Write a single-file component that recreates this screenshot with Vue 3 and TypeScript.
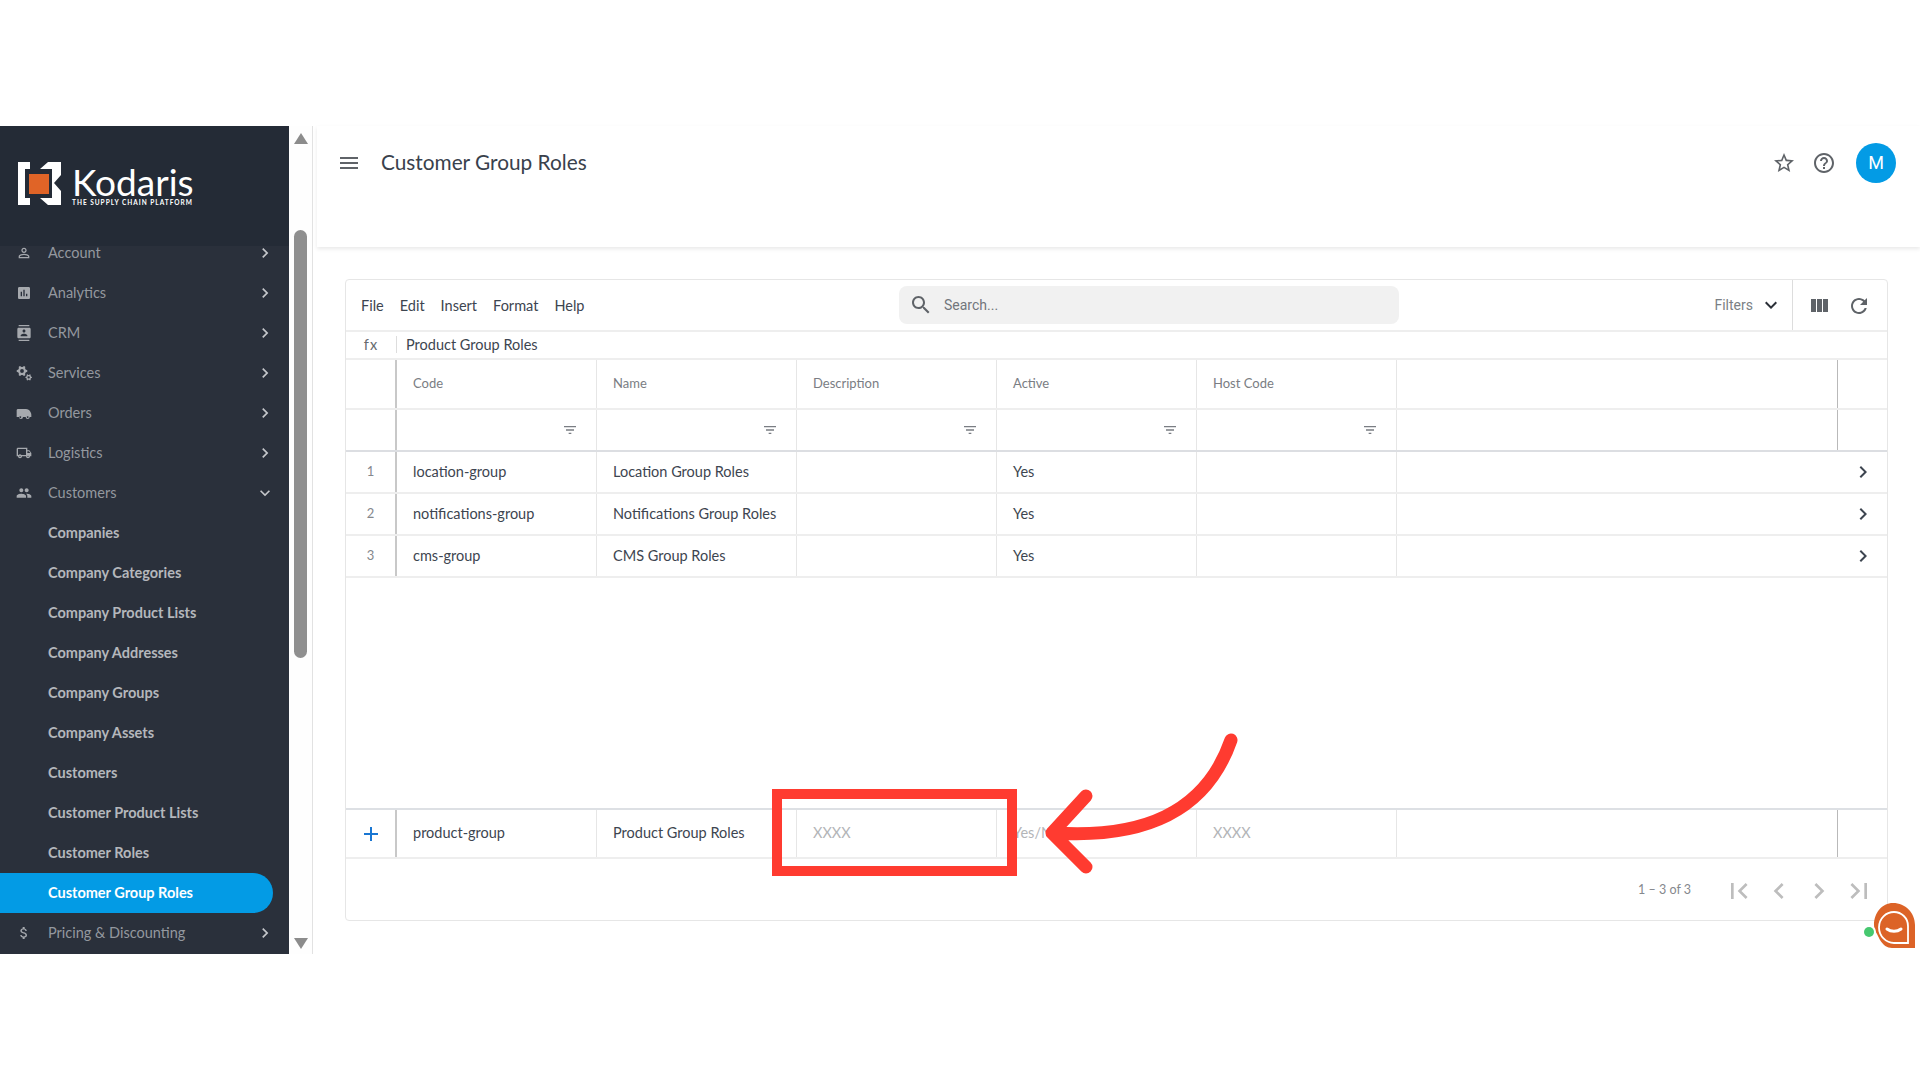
<script setup lang="ts">
// builds a cog with a round hole, the Services icon uses two of them
const gear = (cx: number, cy: number, r: number, teeth: number) => {
  const pts: string[] = []
  const step = (Math.PI * 2) / (teeth * 4)
  for (let i = 0; i < teeth * 4; i++) {
    const rad = i % 4 < 2 ? r : r * 0.74
    const a = step * (i - 0.5)
    pts.push(`${(cx + rad * Math.cos(a)).toFixed(2)} ${(cy + rad * Math.sin(a)).toFixed(2)}`)
  }
  const h = r * 0.36
  return `M${pts.join('L')}ZM${cx - h} ${cy}a${h} ${h} 0 1 0 ${h * 2} 0a${h} ${h} 0 1 0 ${-h * 2} 0Z`
}

const icons: Record<string, string> = {
  person: 'M12 5.9c1.16 0 2.1.94 2.1 2.1s-.94 2.1-2.1 2.1S9.9 9.16 9.9 8s.94-2.1 2.1-2.1m0 9c2.97 0 6.1 1.46 6.1 2.1v1.1H5.9V17c0-.64 3.13-2.1 6.1-2.1M12 4C9.79 4 8 5.79 8 8s1.79 4 4 4 4-1.79 4-4-1.79-4-4-4zm0 9c-2.67 0-8 1.34-8 4v3h16v-3c0-2.66-5.33-4-8-4z',
  chart: 'M19 3H5c-1.1 0-2 .9-2 2v14c0 1.1.9 2 2 2h14c1.1 0 2-.9 2-2V5c0-1.1-.9-2-2-2zM9 17H7v-7h2v7zm4 0h-2V7h2v10zm4 0h-2v-4h2v4z',
  contacts: 'M20 0H4v2h16V0zM4 24h16v-2H4v2zM20 4H4c-1.1 0-2 .9-2 2v12c0 1.1.9 2 2 2h16c1.1 0 2-.9 2-2V6c0-1.1-.9-2-2-2zm-8 2.75c1.24 0 2.25 1.01 2.25 2.25s-1.01 2.25-2.25 2.25S9.75 10.24 9.75 9 10.76 6.75 12 6.75zM17 17H7v-1.5c0-1.67 3.33-2.5 5-2.5s5 .83 5 2.5V17z',
  gears: gear(9, 9, 8, 6) + gear(19, 18.5, 5, 6),
  van: 'M1 8c0-1.1.9-2 2-2h12c2.800 0 5.200 1.500 6.500 4 1 1.500 1.500 3 1.500 4.500V18h-2.500a3 3 0 0 1-6 0h-4a3 3 0 0 1-6 0H1zM6.500 16.700a1.300 1.300 0 1 0 .01 0zM17.500 16.700a1.300 1.300 0 1 0 .01 0z',
  truck: 'M20 8h-3V4H3c-1.100 0-2 .9-2 2v11h2c0 1.660 1.340 3 3 3s3-1.340 3-3h6c0 1.660 1.340 3 3 3s3-1.340 3-3h2v-5l-3-4zm-.5 1.500l1.960 2.500H17V9.500h2.500zM6 18c-.55 0-1-.45-1-1s.45-1 1-1 1 .45 1 1-.45 1-1 1zm2.220-3c-.55-.61-1.330-1-2.220-1s-1.670.39-2.220 1H3V6h12v9H8.220zM18 18c-.55 0-1-.45-1-1s.45-1 1-1 1 .45 1 1-.45 1-1 1z',
  people: 'M16 11c1.660 0 2.990-1.340 2.990-3S17.660 5 16 5c-1.660 0-3 1.340-3 3s1.340 3 3 3zm-8 0c1.660 0 2.990-1.340 2.990-3S9.660 5 8 5C6.340 5 5 6.340 5 8s1.340 3 3 3zm0 2c-2.330 0-7 1.170-7 3.500V19h14v-2.500c0-2.330-4.670-3.500-7-3.500zm8 0c-.29 0-.62.02-.97.05 1.160.84 1.970 1.970 1.970 3.450V19h6v-2.500c0-2.330-4.670-3.500-7-3.500z',
  money: 'M11.800 10.900c-2.270-.59-3-1.200-3-2.150 0-1.090 1.010-1.850 2.700-1.850 1.780 0 2.440.85 2.500 2.100h2.210c-.07-1.720-1.120-3.300-3.210-3.810V3h-3v2.160c-1.940.42-3.500 1.680-3.500 3.610 0 2.310 1.910 3.460 4.700 4.130 2.500.6 3 1.480 3 2.410 0 .69-.49 1.790-2.700 1.790-2.060 0-2.870-.92-2.980-2.100h-2.200c.12 2.190 1.760 3.420 3.680 3.830V21h3v-2.150c1.950-.37 3.500-1.500 3.500-3.550 0-2.840-2.430-3.810-4.700-4.400z',
  right: 'M10 6L8.590 7.410 13.170 12l-4.580 4.590L10 18l6-6z',
  left: 'M15.410 7.410L14 6l-6 6 6 6 1.410-1.410L10.830 12z',
  down: 'M16.590 8.590L12 13.170 7.410 8.590 6 10l6 6 6-6z',
  first: 'M18.410 16.590L13.820 12l4.590-4.590L17 6l-6 6 6 6zM6 6h2v12H6z',
  last: 'M5.590 7.410L10.180 12l-4.590 4.590L7 18l6-6-6-6zM16 6h2v12h-2z',
  filter: 'M10 18h4v-2h-4v2zM3 6v2h18V6H3zm3 7h12v-2H6v2z',
  menu: 'M3 18h18v-2H3v2zm0-5h18v-2H3v2zm0-7v2h18V6H3z',
  star: 'M22 9.240l-7.190-.62L12 2 9.190 8.630 2 9.240l5.460 4.730L5.820 21 12 17.270 18.180 21l-1.630-7.030L22 9.240zM12 15.400l-3.760 2.270 1-4.280-3.320-2.880 4.380-.38L12 6.100l1.710 4.040 4.380.38-3.320 2.880 1 4.280L12 15.400z',
  help: 'M11 18h2v-2h-2v2zm1-16C6.480 2 2 6.480 2 12s4.480 10 10 10 10-4.480 10-10S17.520 2 12 2zm0 18c-4.410 0-8-3.590-8-8s3.590-8 8-8 8 3.590 8 8-3.590 8-8 8zm0-14c-2.210 0-4 1.790-4 4h2c0-1.100.9-2 2-2s2 .9 2 2c0 2-3 1.750-3 5h2c0-2.250 3-2.500 3-5 0-2.210-1.790-4-4-4z',
  search: 'M15.500 14h-.79l-.28-.27C15.410 12.590 16 11.110 16 9.500 16 5.910 13.090 3 9.500 3S3 5.910 3 9.500 5.910 16 9.500 16c1.610 0 3.090-.59 4.230-1.570l.27.28v.79l5 4.990L20.490 19l-4.990-5zm-6 0C7.010 14 5 11.990 5 9.500S7.010 5 9.500 5 14 7.010 14 9.500 11.990 14 9.500 14z',
  columns: 'M10 18h5V5h-5v13zm-6 0h5V5H4v13zM16 5v13h5V5h-5z',
  refresh: 'M17.650 6.350C16.200 4.900 14.210 4 12 4c-4.420 0-7.990 3.580-7.990 8s3.570 8 7.990 8c3.730 0 6.840-2.550 7.730-6h-2.080c-.82 2.330-3.040 4-5.650 4-3.310 0-6-2.690-6-6s2.690-6 6-6c1.660 0 3.140.69 4.220 1.780L13 11h7V4l-2.350 2.350z',
  add: 'M19 13h-6v6h-2v-6H5v-2h6V5h2v6h6v2z',
}

interface NavItem {
  label: string
  icon?: string
  open?: boolean
  closed?: boolean
  active?: boolean
}

const nav: NavItem[] = [
  { label: 'Account', icon: 'person', closed: true },
  { label: 'Analytics', icon: 'chart', closed: true },
  { label: 'CRM', icon: 'contacts', closed: true },
  { label: 'Services', icon: 'gears', closed: true },
  { label: 'Orders', icon: 'van', closed: true },
  { label: 'Logistics', icon: 'truck', closed: true },
  { label: 'Customers', icon: 'people', open: true },
  { label: 'Companies' },
  { label: 'Company Categories' },
  { label: 'Company Product Lists' },
  { label: 'Company Addresses' },
  { label: 'Company Groups' },
  { label: 'Company Assets' },
  { label: 'Customers' },
  { label: 'Customer Product Lists' },
  { label: 'Customer Roles' },
  { label: 'Customer Group Roles', active: true },
  { label: 'Pricing & Discounting', icon: 'money', closed: true },
]

const menus = ['File', 'Edit', 'Insert', 'Format', 'Help']
const columns = ['Code', 'Name', 'Description', 'Active', 'Host Code']

const rows = [
  { n: 1, code: 'location-group', name: 'Location Group Roles' },
  { n: 2, code: 'notifications-group', name: 'Notifications Group Roles' },
  { n: 3, code: 'cms-group', name: 'CMS Group Roles' },
]

const pager = ['first', 'left', 'right', 'last']
</script>

<template>
  <div class="page">
    <aside class="sidebar">
      <div class="side-panel">
        <div class="brand">
          <svg class="mark" viewBox="0 0 43 43" width="43" height="43">
            <path fill="#fff" d="M0 0H12V7H7V36H12V43H0z" />
            <path fill="#fff" d="M22 7L30 0H43V13L36 21L43 29V43H30L22 36H34V7z" />
            <rect x="11" y="12" width="20" height="20" fill="#e06427" />
          </svg>
          <div class="wordmark">
            <div class="word">Kodaris</div>
            <div class="tag">THE SUPPLY CHAIN PLATFORM</div>
          </div>
        </div>
        <nav class="nav">
          <div
            v-for="item in nav"
            :key="item.label + (item.icon || '')"
            class="nav-item"
            :class="{ top: item.icon, active: item.active }"
          >
            <svg v-if="item.icon" class="nav-icon" viewBox="0 0 24 24"><path fill-rule="evenodd" :d="icons[item.icon]" /></svg>
            <span class="nav-label">{{ item.label }}</span>
            <svg v-if="item.closed" class="nav-chev" viewBox="0 0 24 24"><path :d="icons.right" /></svg>
            <svg v-if="item.open" class="nav-chev" viewBox="0 0 24 24"><path :d="icons.down" /></svg>
          </div>
        </nav>
      </div>
      <div class="scrollbar">
        <span class="arrow up"></span>
        <span class="thumb"></span>
        <span class="arrow dn"></span>
      </div>
    </aside>

    <main class="main">
      <header class="topbar">
        <svg class="ico menu-ico" viewBox="0 0 24 24"><path :d="icons.menu" /></svg>
        <h1 class="title">Customer Group Roles</h1>
        <svg class="ico star" viewBox="0 0 24 24"><path :d="icons.star" /></svg>
        <svg class="ico help" viewBox="0 0 24 24"><path :d="icons.help" /></svg>
        <div class="avatar">M</div>
      </header>

      <section class="card">
        <div class="toolbar">
          <div class="menus">
            <span v-for="m in menus" :key="m">{{ m }}</span>
          </div>
          <div class="search">
            <svg class="ico" viewBox="0 0 24 24"><path :d="icons.search" /></svg>
            <span>Search...</span>
          </div>
          <div class="filters">
            <span>Filters</span>
            <svg class="ico" viewBox="0 0 24 24"><path :d="icons.down" /></svg>
          </div>
          <div class="tools">
            <svg class="ico" viewBox="0 0 24 24"><path :d="icons.columns" /></svg>
            <svg class="ico" viewBox="0 0 24 24"><path :d="icons.refresh" /></svg>
          </div>
        </div>

        <div class="fx-row">
          <span class="fx">fx</span>
          <span class="fx-value">Product Group Roles</span>
        </div>

        <div class="row head">
          <div class="cell gutter"></div>
          <div v-for="c in columns" :key="c" class="cell">{{ c }}</div>
          <div class="cell"></div>
          <div class="cell end"></div>
        </div>

        <div class="row filter-row">
          <div class="cell gutter"></div>
          <div v-for="c in columns" :key="c" class="cell">
            <svg class="filter-ico" viewBox="0 0 24 24"><path :d="icons.filter" /></svg>
          </div>
          <div class="cell"></div>
          <div class="cell end"></div>
        </div>

        <div v-for="r in rows" :key="r.n" class="row data">
          <div class="cell gutter num">{{ r.n }}</div>
          <div class="cell">{{ r.code }}</div>
          <div class="cell">{{ r.name }}</div>
          <div class="cell"></div>
          <div class="cell">Yes</div>
          <div class="cell"></div>
          <div class="cell plain"></div>
          <div class="cell end">
            <svg class="ico row-chev" viewBox="0 0 24 24"><path :d="icons.right" /></svg>
          </div>
        </div>

        <div class="spacer"></div>

        <div class="row add-row">
          <div class="cell gutter">
            <svg class="plus" viewBox="0 0 24 24"><path :d="icons.add" /></svg>
          </div>
          <div class="cell">product-group</div>
          <div class="cell">Product Group Roles</div>
          <div class="cell hint">XXXX</div>
          <div class="cell hint">Yes/No</div>
          <div class="cell hint">XXXX</div>
          <div class="cell"></div>
          <div class="cell end"></div>
        </div>

        <div class="pager">
          <span class="count">1 – 3 of 3</span>
          <svg v-for="p in pager" :key="p" class="pager-ico" viewBox="0 0 24 24"><path :d="icons[p]" /></svg>
        </div>
      </section>
    </main>

    <!-- annotation drawn over the screenshot -->
    <svg class="callout" viewBox="0 0 1920 1080" width="1920" height="1080">
      <rect x="777" y="794" width="235" height="77" fill="none" stroke="#ff3b30" stroke-width="10" />
      <path
        d="M1231 740C1205 815 1140 838 1056 833M1086 796L1052 833L1086 867"
        fill="none"
        stroke="#ff3b30"
        stroke-width="13"
        stroke-linecap="round"
        stroke-linejoin="round"
      />
    </svg>

    <svg class="chat" viewBox="0 0 56 56" width="56" height="56">
      <path fill="#dc6327" d="M30 3c12.500 0 22 10 22 22v23H29c-5 0-9-3-12-8l-3-6c-2-3-3-6-3-9C11 13 19 3 30 3z" />
      <path fill="none" stroke="#fff" stroke-width="1.800" d="M31 12c7.500 0 14 6 14 14v17H31c-8 0-15-7-15-15.500C16 18.500 23 12 31 12z" />
      <path fill="none" stroke="#fff" stroke-width="3" stroke-linecap="round" d="M24 29c4 3 10 3 14 0" />
      <circle cx="6" cy="32" r="7" fill="#fff" />
      <circle cx="6" cy="32" r="5" fill="#46c86f" />
    </svg>
  </div>
</template>

<style scoped>
.page {
  position: relative;
  width: 1920px;
  height: 1080px;
  padding: 126px 0;
  box-sizing: border-box;
  display: flex;
  background: #fff;
  overflow: hidden;
  font-family: "Lato", sans-serif;
  color: #3d4550;
}

.sidebar {
  display: flex;
  flex: none;
  width: 313px;
  height: 828px;
  border-right: 1px solid #e2e2e2;
  box-sizing: border-box;
}

.side-panel {
  width: 289px;
  background: #2a303b;
  overflow: hidden;
}

.brand {
  position: relative;
  z-index: 1;
  height: 120px;
  background: #242b36;
  display: flex;
  align-items: flex-start;
  padding: 36px 0 0 18px;
  box-sizing: border-box;
}

.mark {
  flex: none;
}

.wordmark {
  margin-left: 11px;
  color: #fff;
}

.word {
  font-size: 37px;
  line-height: 37px;
  margin-top: 1px;
}

.tag {
  font-size: 6.500px;
  line-height: 6px;
  font-weight: 700;
  letter-spacing: 1px;
  white-space: nowrap;
}

.nav {
  margin-top: -13px;
}

.nav-item {
  position: relative;
  height: 40px;
  display: flex;
  align-items: center;
  padding-left: 48px;
  margin-right: 16px;
  font-size: 14.500px;
  font-weight: 700;
  color: #b4b7bc;
}

.nav-label {
  margin-top: -2px;
}

.nav-item.top {
  font-weight: 400;
  color: #94989f;
}

.nav-item.active {
  background: #039be5;
  color: #fff;
  border-radius: 0 20px 20px 0;
}

.nav-icon {
  position: absolute;
  left: 16px;
  width: 16px;
  height: 16px;
  fill: #a6a9ae;
}

.nav-chev {
  position: absolute;
  right: -2px;
  width: 20px;
  height: 20px;
  fill: #c4c6ca;
}

.scrollbar {
  position: relative;
  flex: 1;
  display: flex;
  flex-direction: column;
  align-items: center;
  background: #fefefe;
}

.arrow {
  position: absolute;
  width: 0;
  height: 0;
  border-left: 7px solid transparent;
  border-right: 7px solid transparent;
}

.arrow.up {
  top: 7px;
  border-bottom: 11px solid #8c8c8c;
}

.arrow.dn {
  bottom: 5px;
  border-top: 11px solid #8c8c8c;
}

.thumb {
  width: 13px;
  height: 428px;
  margin-top: 104px;
  border-radius: 7px;
  background: #8f8f8f;
}

.main {
  flex: 1;
  min-width: 0;
  display: flex;
  flex-direction: column;
}

.ico {
  width: 24px;
  height: 24px;
  fill: #5f6368;
  flex: none;
}

.topbar {
  height: 121px;
  flex: none;
  display: flex;
  align-items: flex-start;
  margin-left: 4px;
  padding: 17px 24px 0 20px;
  box-sizing: border-box;
  box-shadow: 0 2px 4px rgba(0, 0, 0, 0.09);
}

.menu-ico {
  margin-top: 8px;
}

.title {
  margin: -1px 0 0 20px;
  flex: 1;
  font-size: 20.800px;
  line-height: 40px;
  font-weight: 400;
  color: #39414c;
}

.star {
  margin: 8px 0 0;
}

.help {
  margin: 8px 0 0 16px;
}

.avatar {
  margin-left: 20px;
  width: 40px;
  height: 40px;
  border-radius: 50%;
  background: #039be5;
  color: #fff;
  font-family: "Roboto", sans-serif;
  font-size: 18px;
  line-height: 40px;
  text-align: center;
}

.card {
  margin: 32px 32px 33px;
  flex: 1;
  display: flex;
  flex-direction: column;
  border: 1px solid #e6e6e6;
  border-radius: 4px;
  font-size: 14.500px;
}

.toolbar {
  flex: none;
  height: 52px;
  display: grid;
  grid-template-columns: 553px 500px 1fr 95px;
  align-items: center;
  border-bottom: 2px solid #eee;
  box-sizing: border-box;
}

.menus {
  display: flex;
  gap: 16px;
  padding-left: 15px;
  color: #3d4550;
}

.search {
  height: 38px;
  display: flex;
  align-items: center;
  gap: 11px;
  padding-left: 10px;
  background: #f1f1f1;
  border-radius: 8px;
  color: #72767c;
  font-family: "Roboto", sans-serif;
  font-size: 14px;
}

.filters {
  display: flex;
  justify-content: flex-end;
  align-items: center;
  gap: 6px;
  padding-right: 9px;
  color: #7b7f85;
  font-family: "Roboto", sans-serif;
  font-size: 14px;
}

.filters .ico {
  fill: #2b3038;
}

.tools {
  height: 50px;
  display: flex;
  align-items: center;
  gap: 16px;
  padding: 2px 0 0 14px;
  border-left: 1px solid #ddd;
  box-sizing: border-box;
}

.fx-row {
  flex: none;
  height: 28px;
  display: flex;
  align-items: center;
  padding-bottom: 2px;
  border-bottom: 2px solid #eee;
  box-sizing: border-box;
}

.fx {
  width: 50px;
  text-align: center;
  letter-spacing: 1px;
  color: #66696e;
  border-right: 1px solid #ddd;
}

.fx-value {
  padding-left: 9px;
}

.row {
  flex: none;
  display: grid;
  grid-template-columns: 51px 200px 200px 200px 200px 200px 1fr 49px;
  box-sizing: border-box;
  border-bottom: 2px solid #eee;
}

.cell {
  display: flex;
  align-items: center;
  padding: 0 0 2px 16px;
  border-right: 1px solid #e6e6e6;
  min-width: 0;
  white-space: nowrap;
}

.cell.gutter {
  padding: 0 0 2px;
  justify-content: center;
  border-right: 2px solid #c8c8c8;
}

.cell.end {
  padding: 0;
  justify-content: center;
  border-right: none;
}

.head {
  height: 50px;
  font-size: 13px;
  color: #7a7d83;
}

.head .cell:nth-child(7),
.filter-row .cell:nth-child(7),
.add-row .cell:nth-child(7) {
  border-right-color: #b9b9b9;
}

.filter-row {
  height: 42px;
  border-bottom-color: #dcdee2;
}

.filter-row .cell {
  justify-content: flex-end;
  padding: 0 18px 0 0;
}

.filter-ico {
  width: 16px;
  height: 16px;
  fill: #7a7d83;
}

.data {
  height: 42px;
}

.data .plain {
  border-right-color: transparent;
}

.num {
  color: #85888d;
  font-size: 13px;
}

.row-chev {
  fill: #3d4550;
}

.spacer {
  flex: 1;
}

.add-row {
  height: 51px;
  border-top: 2px solid #dde0e4;
}

.add-row .gutter {
  padding: 0;
}

.plus {
  width: 24px;
  height: 24px;
  fill: #1976d2;
}

.hint {
  color: #b3b5b8;
}

.pager {
  flex: 1 0 60px;
  max-height: 61px;
  display: flex;
  align-items: center;
  justify-content: flex-end;
  gap: 8px;
  padding: 2px 12px 0 0;
  box-sizing: border-box;
}

.count {
  margin: 0 24px 3px 0;
  font-size: 12.500px;
  color: #85888d;
}

.pager-ico {
  width: 32px;
  height: 32px;
  fill: #bdbdbd;
}

.callout {
  position: absolute;
  left: 0;
  top: 0;
  pointer-events: none;
}

.chat {
  position: absolute;
  left: 1863px;
  top: 900px;
}
</style>
